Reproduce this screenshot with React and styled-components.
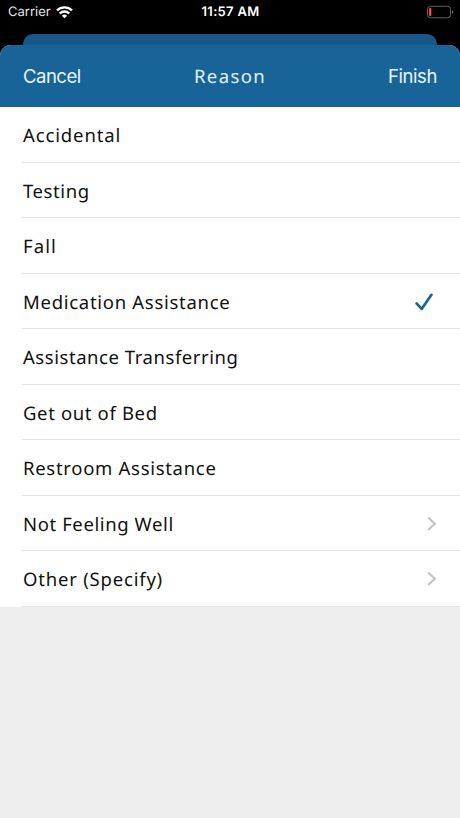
import React from "react";
import styled, { createGlobalStyle } from "styled-components";

const GlobalStyle = createGlobalStyle`
  * { box-sizing: border-box; }
  body { margin: 0; background: #000; }
`;

const Screen = styled.div`
  display: flex;
  flex-direction: column;
  width: 460px;
  height: 818px;
  overflow: hidden;
  background: #000;
  font-family: "Noto Sans", sans-serif;
  text-rendering: geometricPrecision;
`;

const StatusBar = styled.header`
  display: grid;
  grid-template-columns: 1fr auto 1fr;
  align-items: center;
  flex: none;
  height: 24px;
  padding: 0 6px 0 8px;
  color: #fff;
  font: 400 13px/24px Inter, sans-serif;
`;

const Carrier = styled.div`
  display: flex;
  align-items: center;
  gap: 5px;
  padding-top: 1px;
  color: #e4e4e4;
  line-height: 23px;

  svg { margin-bottom: 1px; }
`;

const Clock = styled.time`
  padding: 1px 1px 0 0;
  font-weight: 600;
  font-size: 13px;
  line-height: 23px;
  letter-spacing: 0.3px;
`;

const BatteryIcon = styled.svg`
  justify-self: end;
`;

const SheetBehind = styled.div`
  flex: none;
  height: 11px;
  margin: 10px 23px 0;
  border-radius: 10px 10px 0 0;
  background: #185888;
`;

const Sheet = styled.main`
  display: flex;
  flex: 1;
  flex-direction: column;
  overflow: hidden;
  border-radius: 11px 11px 0 0;
  background: #eee;
`;

const NavBar = styled.nav`
  display: grid;
  grid-template-columns: 1fr auto 1fr;
  align-items: center;
  flex: none;
  height: 62px;
  padding: 0 23px;
  background: #186499;
  border-bottom: 1px solid #175d8f;
`;

const NavButton = styled.button`
  justify-self: ${({ $side }) => $side};
  padding: 0;
  border: 0;
  background: none;
  color: #e9f6ff;
  font: 400 18.5px/24px Inter, sans-serif;
  letter-spacing: ${({ $tracking }) => $tracking}px;
`;

const Title = styled.h1`
  margin: 0;
  padding-top: 2px;
  color: #e2f1fb;
  font-size: 18.5px;
  font-weight: 400;
  line-height: 24px;
  letter-spacing: 1.4px;
`;

const List = styled.ul`
  flex: none;
  margin: 0;
  padding: 0;
  background: #fff;
  list-style: none;
`;

const Row = styled.li`
  display: flex;
  height: 55.53px;
  padding-left: 22px;
`;

const RowContent = styled.div`
  display: flex;
  flex: 1;
  align-items: center;
  justify-content: space-between;
  padding: 2px ${({ $checked }) => ($checked ? 27 : 23)}px 0 1px;
  border-bottom: 1px solid #e4e4e4;
`;

const Label = styled.span`
  padding-top: 1.6px;
  color: #111;
  font-size: 18.5px;
  line-height: 24px;
  letter-spacing: ${({ $tracking }) => $tracking}px;
  white-space: nowrap;
`;

const reasons = [
  { label: "Accidental", tracking: 0.87 },
  { label: "Testing", tracking: 0.58 },
  { label: "Fall", tracking: 1.1 },
  { label: "Medication Assistance", tracking: 0.71, checked: true },
  { label: "Assistance Transferring", tracking: 0.55 },
  { label: "Get out of Bed", tracking: 0.64 },
  { label: "Restroom Assistance", tracking: 0.7 },
  { label: "Not Feeling Well", tracking: 0.6, more: true },
  { label: "Other (Specify)", tracking: 0.8, more: true },
];

const Wifi = () => (
  <svg width="17" height="13" viewBox="0 0 17 13" fill="none" stroke="#fff" strokeWidth="2.4">
    <path d="M1 4.4a10.8 10.8 0 0 1 15 0" />
    <path d="M3.7 7.5a6.9 6.9 0 0 1 9.6 0" />
    <path d="M5.9 9.7a3.7 3.7 0 0 1 5.2 0l-2.6 2.6z" fill="#fff" stroke="none" />
  </svg>
);

const Battery = () => (
  <BatteryIcon width="28" height="14" viewBox="0 0 28 14" fill="none">
    <rect x="1.5" y="1.3" width="23" height="11.5" rx="3" stroke="#626262" />
    <rect x="3" y="3" width="2.4" height="8" rx="0.8" fill="#ee4a43" />
    <path d="M26 5.2c1.6.7 1.6 3 0 3.7z" fill="#727272" />
  </BatteryIcon>
);

const Check = () => (
  <svg width="18" height="18" viewBox="0 0 18 18" fill="none" stroke="#186499" strokeWidth="2.7" strokeLinecap="round" strokeLinejoin="round">
    <path d="M1.6 10.4 6.7 15.9 16.4 1.8" />
  </svg>
);

const Chevron = () => (
  <svg width="10" height="16" viewBox="0 0 10 16" fill="none" stroke="#c2c2c4" strokeWidth="2.1">
    <path d="M1.2 1.5 7.8 7.7l-6.6 6.2" />
  </svg>
);

export default function App() {
  return (
    <>
      <GlobalStyle />
      <Screen>
        <StatusBar>
          <Carrier>Carrier<Wifi /></Carrier>
          <Clock>11:57 AM</Clock>
          <Battery />
        </StatusBar>
        <SheetBehind />
        <Sheet>
          <NavBar>
            <NavButton $side="start" $tracking={-0.5}>Cancel</NavButton>
            <Title>Reason</Title>
            <NavButton $side="end" $tracking={-0.4}>Finish</NavButton>
          </NavBar>
          <List>
            {reasons.map(({ label, tracking, checked, more }) => (
              <Row key={label}>
                <RowContent $checked={checked}>
                  <Label $tracking={tracking}>{label}</Label>
                  {checked && <Check />}
                  {more && <Chevron />}
                </RowContent>
              </Row>
            ))}
          </List>
        </Sheet>
      </Screen>
    </>
  );
}
